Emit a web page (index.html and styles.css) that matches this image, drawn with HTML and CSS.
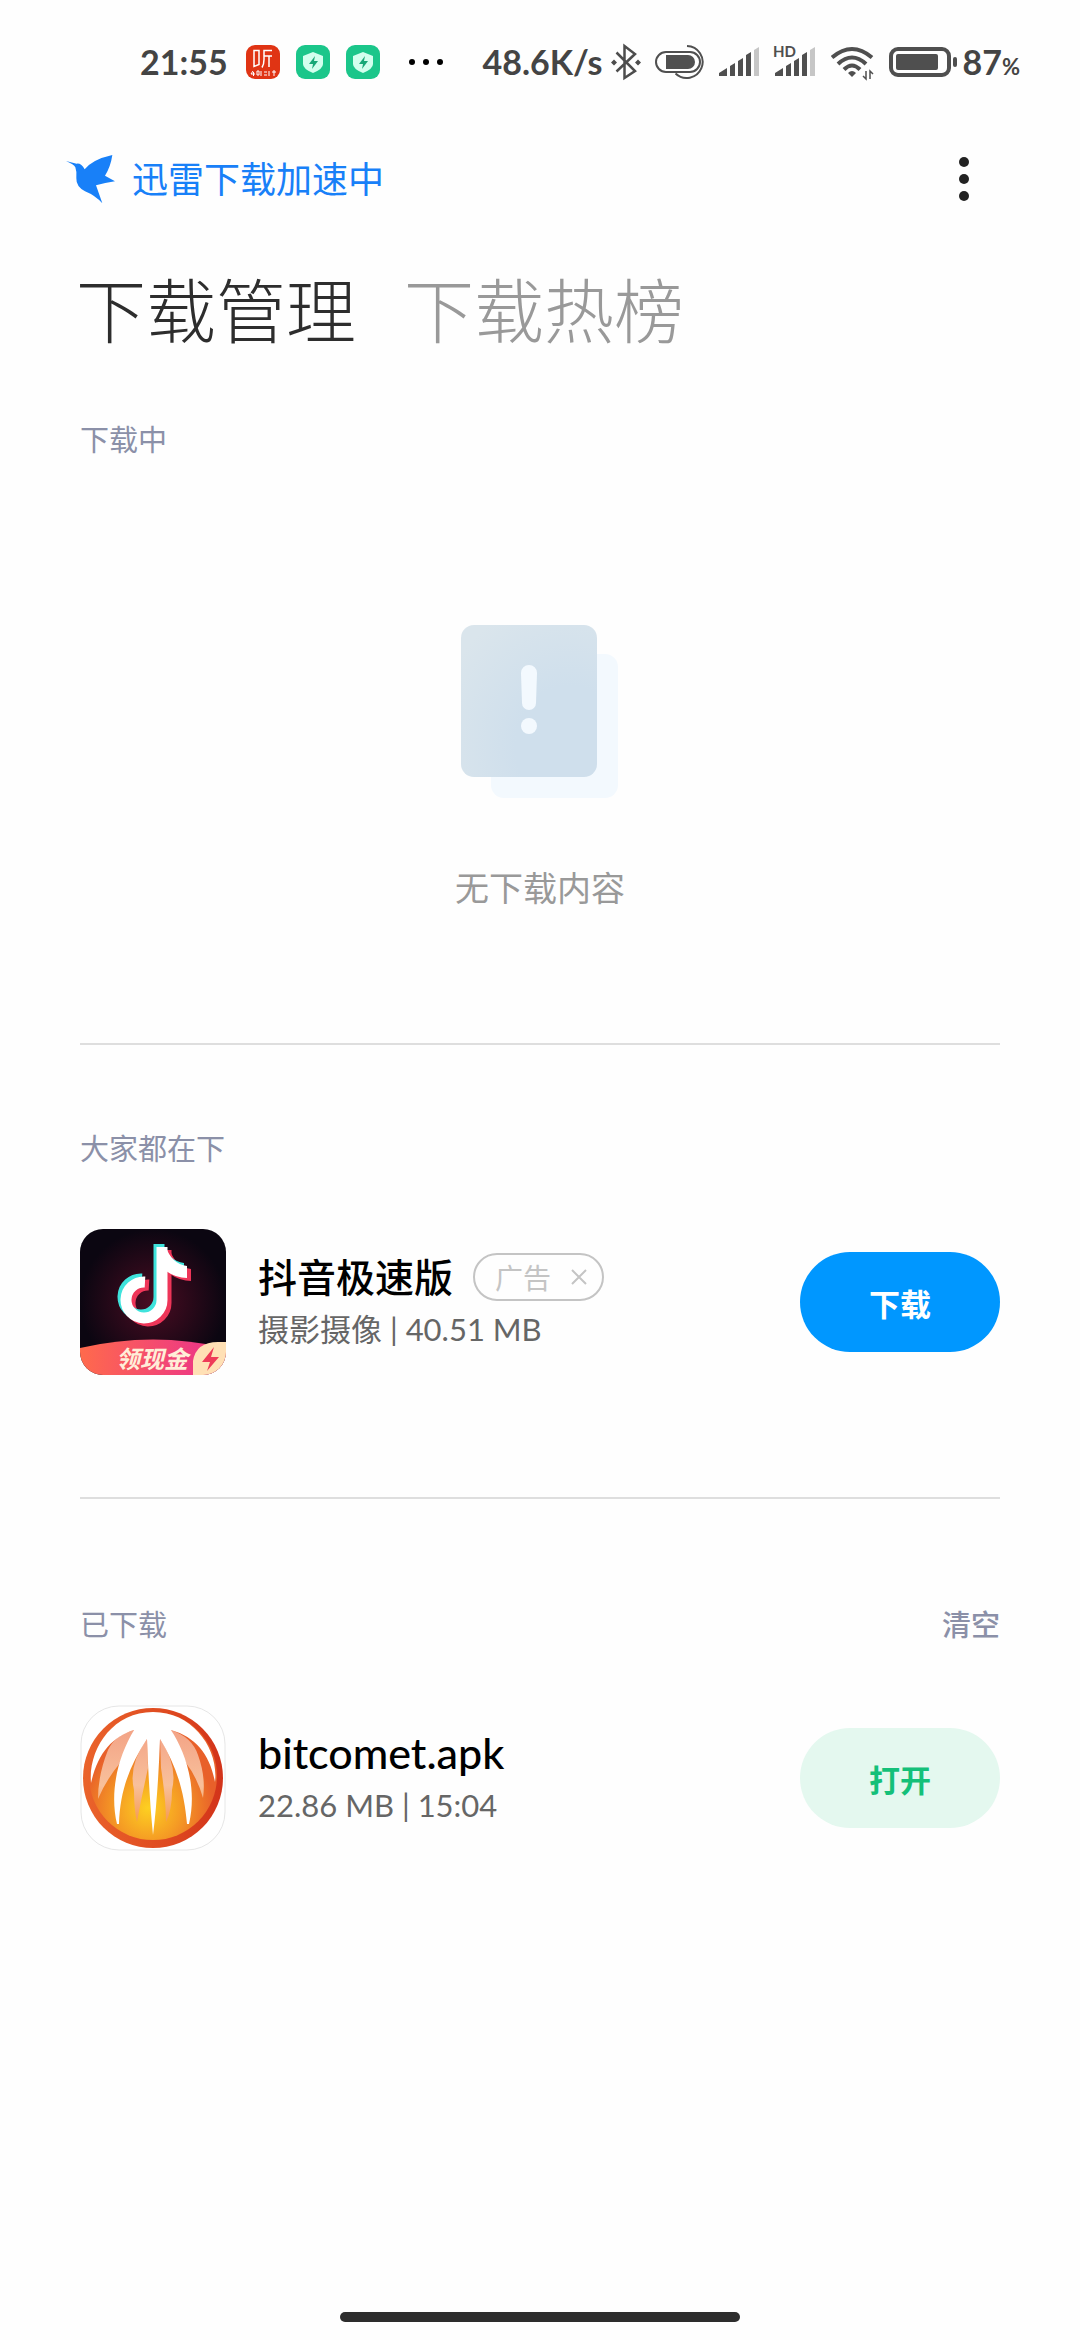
FILE: index.html
```
<!DOCTYPE html>
<html lang="zh-CN">
<head>
    <meta charset="UTF-8">
    <meta name="viewport" content="width=device-width, initial-scale=1.0">
    <title>下载管理</title>
    <link rel="stylesheet" href="styles.css">
</head>
<body>
    <div class="status-bar">
        <div class="status-left">
            <span class="time">21:55</span>
            <svg class="app-icon" width="34" height="34" viewBox="0 0 34 34">
                <rect width="34" height="34" rx="9" fill="#e03414"/>
                <g fill="none" stroke="#fff" stroke-width="1.5">
                    <path d="M8 5.500h5v14l-5 2zM26 5.500h-8v9q0 5-2 8M18 11h8M23 11v11"/>
                    <path d="M7 26l-2 3h4M7.500 27v4M11 26h2v4h-2zM15 26v5M18 27h3M18 30h3M23 26v5M26 27h4M28 25v6" stroke-width="1"/>
                </g>
            </svg>
            <svg class="app-icon" width="34" height="34" viewBox="0 0 34 34">
                <rect width="34" height="34" rx="9" fill="#1bc68a"/>
                <path d="M17 7l10 4v8q0 5-10 9q-10-4-10-9v-8z" fill="#d3ffee"/>
                <path d="M19 11l-6 8h4l-1 5 6-8h-4z" fill="#17a877"/>
            </svg>
            <svg class="app-icon" width="34" height="34" viewBox="0 0 34 34">
                <rect width="34" height="34" rx="9" fill="#1bc68a"/>
                <path d="M17 7l10 4v8q0 5-10 9q-10-4-10-9v-8z" fill="#d3ffee"/>
                <path d="M19 11l-6 8h4l-1 5 6-8h-4z" fill="#17a877"/>
            </svg>
            <svg class="more-dots" width="36" height="8" viewBox="0 0 36 8">
                <circle cx="4" cy="4" r="3"/><circle cx="18" cy="4" r="3"/><circle cx="32" cy="4" r="3"/>
            </svg>
        </div>
        <div class="status-right">
            <span class="speed">48.6K/s</span>
            <!-- bluetooth -->
            <svg width="30" height="44" viewBox="0 0 30 44" fill="none" stroke="#4d4d4d" stroke-width="2.500">
                <path d="M5.500 12.500L24 31l-10.500 7V6L24 14 5.500 31.500"/>
                <path d="M3 19.500l3 3-3 3-3-3zM27 19.500l3 3-3 3-3-3z" fill="#4d4d4d" stroke="none"/>
            </svg>
            <!-- headset charge -->
            <svg width="50" height="44" viewBox="0 0 50 44" fill="none" stroke="#505050" stroke-width="2">
                <path d="M32 6a16 16 0 1 1-11.500 27.500"/>
                <rect x="1" y="12" width="44" height="20" rx="10" fill="#fff"/>
                <path d="M11 15h22a7 7 0 0 1 0 14h-22z" fill="#505050" stroke="none"/>
            </svg>
            <svg width="40" height="44" viewBox="0 0 40 44" fill="#4f4f4f">
                <path d="M0 36v-3l8-5v8zM11 36v-10l5-3v13zM19 36v-15l5-3v18zM27 36v-21l5-3v24z"/>
                <path d="M35 36v-26l5-3v29z" fill="#c6c6c6"/>
            </svg>
            <svg width="44" height="44" viewBox="0 0 44 44" fill="#4f4f4f">
                <text class="hd" x="0" y="17">HD</text>
                <path d="M2 36v-3l8-5v8zM13 36v-10l5-3v13zM21 36v-15l5-3v18zM29 36v-21l5-3v24z"/>
                <path d="M37 36v-26l5-3v29z" fill="#c6c6c6"/>
            </svg>
            <svg width="44" height="44" viewBox="0 0 44 44" fill="none" stroke="#4f4f4f" stroke-width="4">
                <path d="M1 17.500q20-17 40 0M7 24q14-13 28 0M13 29.500q8-8 16 0"/>
                <path d="M17 33q4-4 8 0l-4 4z" fill="#4f4f4f" stroke="none"/>
                <path d="M35 31v8l-3-3M39 39v-8l3 3" stroke-width="1.500"/>
            </svg>
            <svg class="battery" width="68" height="44" viewBox="0 0 68 44" fill="#4f4f4f">
                <rect x="2" y="9" width="58" height="26" rx="7" fill="none" stroke="#4f4f4f" stroke-width="4"/>
                <rect x="7" y="14" width="42" height="16" rx="2"/>
                <rect x="64" y="17" width="4" height="10" rx="2"/>
            </svg>
            <span class="percent">87<small>%</small></span>
        </div>
    </div>

    <header class="header">
        <a class="brand" href="#">
            <svg width="50" height="50" viewBox="48 72 150 150" fill="#1880f8">
                <path d="M48 93L80 101Q94 99 104 118Q128 88 187 75Q182 110 165 137L195 154Q165 158 138 166L157 220Q135 196 105 184Q78 170 79 145Q81 125 76 112Q72 103 48 93z"/>
            </svg>
            <span>迅雷下载加速中</span>
        </a>
        <button class="menu" aria-label="更多">
            <svg width="12" height="46" viewBox="0 0 12 46" fill="#222">
                <circle cx="6" cy="6" r="5"/><circle cx="6" cy="23" r="5"/><circle cx="6" cy="40" r="5"/>
            </svg>
        </button>
    </header>

    <nav class="tabs">
        <a class="active" href="#">下载管理</a>
        <a href="#">下载热榜</a>
    </nav>

    <main>
        <section class="downloading">
            <h2>下载中</h2>
            <div class="empty">
                <svg width="158" height="174" viewBox="0 0 158 174">
                    <defs>
                        <radialGradient id="card" cx="0.8" cy="0.8" r="1">
                            <stop offset="0.4" stop-color="#cfdfec"/>
                            <stop offset="1" stop-color="#dae5ec"/>
                        </radialGradient>
                    </defs>
                    <rect x="30" y="29" width="127" height="144" rx="13" fill="#f3f9fe"/>
                    <rect width="136" height="152" rx="13" fill="url(#card)"/>
                    <path d="M60 48a8 8 0 0 1 16 0l-1 30a7 7 0 0 1-14 0z" fill="#f3f9fe"/>
                    <circle cx="68" cy="101" r="8" fill="#f3f9fe"/>
                </svg>
                <p>无下载内容</p>
            </div>
        </section>

        <section class="popular">
            <h2>大家都在下</h2>
            <div class="item">
                <svg class="icon" width="146" height="146" viewBox="0 0 146 146">
                    <defs>
                        <radialGradient id="night">
                            <stop offset="0" stop-color="#4a0c22"/>
                            <stop offset="1" stop-color="#0b0611"/>
                        </radialGradient>
                        <linearGradient id="ribbon">
                            <stop offset="0" stop-color="#ff6a4c"/>
                            <stop offset="0.8" stop-color="#ee3a82"/>
                            <stop offset="1" stop-color="#f44a68"/>
                        </linearGradient>
                        <clipPath id="rounded"><rect width="146" height="146" rx="23"/></clipPath>
                        <g id="note">
                            <path d="M65 53A18 18 0 1 0 82 71V18" fill="none" stroke="currentColor" stroke-width="11"/>
                            <path d="M86 18C89 28 97 36 107 37V49Q96 49 86 42z" fill="currentColor"/>
                        </g>
                    </defs>
                    <g clip-path="url(#rounded)">
                        <rect width="146" height="146" fill="url(#night)"/>
                        <use href="#note" x="4" y="3" color="#ee3558"/>
                        <use href="#note" x="-3" y="-3" color="#3fe3dc"/>
                        <use href="#note" color="#fff"/>
                        <path d="M0 119Q73 102 146 119V146H0z" fill="url(#ribbon)"/>
                        <path d="M113 146V132Q116 113 138 113H146V146z" fill="#ffe0b5"/>
                        <path d="M134 118l-12 15h8l-3 9 12-14h-8z" fill="#ee3a58"/>
                        <text class="ribbon-text" x="36" y="139">领现金</text>
                    </g>
                </svg>
                <div class="info">
                    <div class="name">
                        <h3>抖音极速版</h3>
                        <button class="ad">广告
                            <svg width="16" height="16" viewBox="0 0 16 16" stroke="#c4c4c4" stroke-width="2">
                                <path d="M1 1l14 14M15 1L1 15"/>
                            </svg>
                        </button>
                    </div>
                    <p>摄影摄像 | 40.51 MB</p>
                </div>
                <button class="action primary">下载</button>
            </div>
        </section>

        <section class="downloaded">
            <div class="section-head">
                <h2>已下载</h2>
                <button class="clear">清空</button>
            </div>
            <div class="item">
                <svg class="icon" width="146" height="146" viewBox="0 0 146 146">
                    <defs>
                        <radialGradient id="fire" gradientUnits="userSpaceOnUse" cx="68" cy="103" r="66">
                            <stop offset="0" stop-color="#fdd021"/>
                            <stop offset="0.5" stop-color="#f59b24"/>
                            <stop offset="1" stop-color="#e8602a"/>
                        </radialGradient>
                        <linearGradient id="ring">
                            <stop offset="0" stop-color="#ea632b"/>
                            <stop offset="0.6" stop-color="#df4a20"/>
                            <stop offset="1" stop-color="#d2331a"/>
                        </linearGradient>
                        <linearGradient id="petal" x2="0" y2="1">
                            <stop offset="0" stop-color="#f3a386"/>
                            <stop offset="0.6" stop-color="#f8c09b"/>
                            <stop offset="1" stop-color="#f59a50"/>
                        </linearGradient>
                    </defs>
                    <rect x="1" y="1" width="144" height="144" rx="38" fill="#fff" stroke="#e6e6e6"/>
                    <circle cx="73" cy="73" r="70" fill="url(#ring)"/>
                    <circle cx="73" cy="71" r="64" fill="url(#fire)"/>
                    <path d="M54 25Q35 30 28 45Q18 70 18 94Q26 75 40 58zM67 34Q48 60 54 85Q54 105 57 117Q61 95 68 63zM80 34Q98 60 92 85Q92 105 86 117Q86 95 81 63zM91 25Q112 32 118 50Q126 72 123 93Q117 72 106 58z" fill="url(#petal)"/>
                    <path d="M11 78C8 45 32 7 73 7S139 45 135 77C130 50 116 32 91 25C104 45 118 80 109 119H107C104 85 96 60 80 34Q78 90 73 130Q69 90 67 34C50 60 40 85 39 119H37C29 85 39 50 54 25C32 32 18 48 11 78z" fill="#fff"/>
                </svg>
                <div class="info">
                    <h3 class="filename">bitcomet.apk</h3>
                    <p>22.86 MB | 15:04</p>
                </div>
                <button class="action open">打开</button>
            </div>
        </section>
    </main>

    <div class="home-indicator"></div>
</body>
</html>
```
FILE: styles.css
```
* {
    box-sizing: border-box;
}
body {
    display: flex;
    flex-direction: column;
    min-height: 100vh;
    margin: 0;
    background: #fefefe;
    color: #000;
    font-family: Lato, "Noto Sans CJK SC", sans-serif;
}
h2, h3, p {
    margin: 0;
    font-weight: 400;
}
a {
    color: inherit;
    text-decoration: none;
}
button {
    padding: 0;
    border: none;
    background: none;
    font-family: inherit;
    cursor: pointer;
}
svg {
    display: block;
    flex-shrink: 0;
}

/* status bar */
.status-bar {
    display: flex;
    justify-content: space-between;
    padding: 40px 60px 0 140px;
    color: #444;
    font-size: 34px;
    font-weight: 700;
    line-height: 44px;
}
.status-left,
.status-right {
    display: flex;
    align-items: center;
}
.status-left {
    gap: 16px;
}
.time {
    margin-right: 2px;
}
.more-dots {
    margin-left: 12px;
}
.status-right {
    gap: 14px;
}
.speed {
    margin-right: -6px;
}
.hd {
    font-size: 15px;
}
.percent {
    margin-left: -8px;
}
.percent small {
    font-size: 22px;
    line-height: 1;
}

/* header */
.header {
    display: flex;
    align-items: center;
    justify-content: space-between;
    padding: 70px 110px 0 66px;
}
.brand {
    display: flex;
    align-items: center;
    gap: 16px;
    color: #1880f8;
    font-size: 36px;
    line-height: 50px;
}
.tabs {
    display: flex;
    gap: 48px;
    padding: 65px 76px 0;
    color: #999;
    font-size: 70px;
    font-weight: 300;
    line-height: 84px;
}
.tabs .active {
    color: #2d2d2d;
}

/* sections */
main {
    padding: 0 80px;
}
h2,
.clear {
    color: #8b90a8;
    font-size: 29px;
    line-height: 40px;
}
.clear {
    font-weight: 500;
}
.downloading {
    padding: 67px 0 130px;
}
.empty {
    display: flex;
    flex-direction: column;
    align-items: center;
    gap: 64px;
    padding-top: 165px;
    color: #999;
    font-size: 34px;
    line-height: 50px;
}
.popular {
    padding: 84px 0 122px;
    border-top: 2px solid #dedede;
}
.downloaded {
    padding: 106px 0;
    border-top: 2px solid #dedede;
}
.section-head {
    display: flex;
    justify-content: space-between;
}

/* list item */
.item {
    display: flex;
    align-items: center;
    margin-top: 60px;
}
.info {
    flex: 1;
    margin-left: 32px;
}
.name {
    display: flex;
    align-items: center;
    gap: 20px;
}
.info h3 {
    font-size: 39px;
    font-weight: 500;
    line-height: 54px;
}
.info .filename {
    font-size: 43px;
}
.info p {
    color: #666;
    font-size: 31px;
    line-height: 50px;
}
.ad {
    display: flex;
    align-items: center;
    gap: 20px;
    height: 48px;
    padding: 0 15px 0 20px;
    border: 2px solid #c4c4c4;
    border-radius: 24px;
    color: #c4c4c4;
    font-size: 28px;
}
.action {
    width: 200px;
    height: 100px;
    border-radius: 50px;
    font-size: 31px;
    font-weight: 700;
}
.primary {
    background: #0097ff;
    color: #fff;
}
.open {
    background: #e4f8ef;
    color: #14c079;
}
.ribbon-text {
    fill: #ffeed8;
    font-size: 24px;
    font-style: italic;
    font-weight: 700;
}

.home-indicator {
    width: 400px;
    height: 10px;
    margin: auto auto 18px;
    border-radius: 5px;
    background: #2d2d2d;
}
```
